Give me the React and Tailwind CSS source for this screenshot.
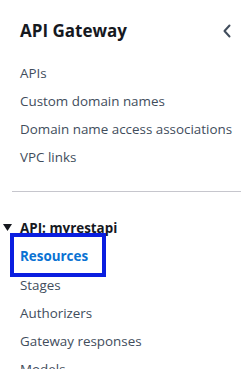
import React from 'react';

const topLinks = ['APIs', 'Custom domain names', 'Domain name access associations', 'VPC links'];
const apiLinks = ['Stages', 'Authorizers', 'Gateway responses', 'Models'];

export default function App() {
    return (
        <div
            className="w-[241px] h-[369px] overflow-hidden bg-white text-[#414d5c]"
            style={{ fontFamily: '"Open Sans", "Noto Sans", Arial, sans-serif' }}
        >
            {/* Header */}
            <div className="flex items-center justify-between pl-5 pr-[9px] pt-[19px]">
                <h2 className="text-[17px] leading-[24px] font-bold text-[#16191f]">API Gateway</h2>
                <svg width="10" height="14" viewBox="0 0 10 14" fill="none">
                    <path d="M7.5 1.5 L2.5 7 L7.5 12.5" stroke="#414d5c" strokeWidth="2" strokeLinecap="round" strokeLinejoin="round" />
                </svg>
            </div>

            {/* Top links */}
            <ul className="mt-[16px] flex flex-col">
                {topLinks.map(link => (
                    <li key={link} className="pl-5 h-[28px] flex items-center text-[13.4px] leading-5 whitespace-nowrap">
                        {link}
                    </li>
                ))}
            </ul>

            <div className="ml-3 mt-[20px] border-t border-[#c6c6cd]" />

            {/* API section */}
            <div className="mt-[27px] flex items-center h-[18px]">
                <svg width="10" height="8" viewBox="0 0 10 8" className="ml-[3px] mr-[7px]">
                    <path d="M0 0 H9 L4.5 7 Z" fill="#16191f" />
                </svg>
                <span className="text-[13.4px] font-bold text-[#16191f]">API: myrestapi</span>
            </div>

            <ul className="flex flex-col">
                <li className="ml-[14px] w-[88px] h-[36px] -mb-[2px] outline-4 outline-[#0a1ee0] flex items-center pt-[3px] pl-[6px] text-[13.4px] font-bold text-[#0972d3]">
                    Resources
                </li>
                {apiLinks.map(link => (
                    <li key={link} className="pl-5 h-[28px] flex items-center text-[13.4px] leading-5 whitespace-nowrap">
                        {link}
                    </li>
                ))}
            </ul>
        </div>
    );
}
